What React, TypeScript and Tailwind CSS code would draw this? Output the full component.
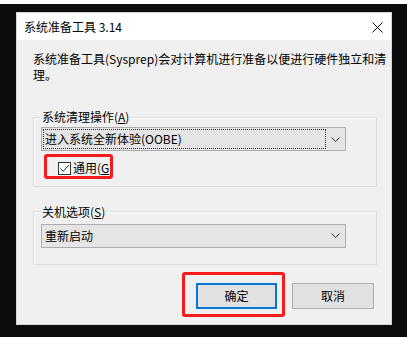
const font = "font-['Noto_Sans_CJK_SC','Noto_Sans',sans-serif]";

function Combo({ label, focused }: { label: string; focused?: boolean }) {
  return (
    <div className="flex h-[24px] w-[305px] border border-[#adadad] bg-[#e5e5e5] p-[1px]">
      <div
        className={`flex flex-1 items-center border px-[1px] ${
          focused ? 'border-dotted border-[#333]' : 'border-transparent'
        }`}
      >
        {label}
      </div>
      <div className="flex w-[18px] items-center justify-center">
        <svg width="9" height="5" viewBox="0 0 9 5">
          <path d="M0.5 0.5L4.5 4.5L8.5 0.5" fill="none" stroke="#333" strokeWidth="1" />
        </svg>
      </div>
    </div>
  );
}

export default function App() {
  return (
    <div className={`flex h-[337px] w-[407px] flex-col overflow-hidden bg-[#0c0c0c] text-[12px] leading-[16px] text-black ${font}`}>
      <div className="h-[4px] shrink-0 bg-white" />
      <div className="pl-[16px] pt-[8px]">
        <div className="flex h-[313px] w-[376px] flex-col border border-[#d4d4d4]">
          {/* title bar */}
          <div className="flex h-[27px] shrink-0 items-center justify-between bg-white pl-[7px] pr-[8px]">
            <span>系统准备工具 3.14</span>
            <svg width="11" height="11" viewBox="0 0 11 11" className="mt-[1px]">
              <path d="M0.5 0.5L10.5 10.5M10.5 0.5L0.5 10.5" stroke="#111" strokeWidth="1" />
            </svg>
          </div>

          {/* body */}
          <div className="flex-1 bg-[#f0f0f0] pl-[16px] pr-[14px] pt-[11px]">
            <p className="whitespace-nowrap">
              系统准备工具(Sysprep)会对计算机进行准备以便进行硬件独立和清
              <br />
              理。
            </p>

            <fieldset className="mt-[26px] border border-[#dcdcdc] pb-[9px] pl-[7px] shadow-[inset_1px_1px_0_#fff]">
              <legend className="px-[1px]">
                系统清理操作(<u>A</u>)
              </legend>
              <div className="mt-[2px]">
                <Combo label="进入系统全新体验(OOBE)" focused />
              </div>
              <div className="relative mt-[9px] ml-[17px] inline-flex h-[16px] items-center">
                <span className="flex h-[13px] w-[13px] items-center justify-center border border-[#333] bg-white">
                  <svg width="11" height="11" viewBox="0 0 11 11">
                    <path d="M1.5 5.5L4.2 8.3L9.8 2.2" fill="none" stroke="#222" strokeWidth="1" />
                  </svg>
                </span>
                <span className="ml-[2px]">
                  通用(<u>G</u>)
                </span>
                <span className="pointer-events-none absolute left-[-14px] top-[-6px] h-[25px] w-[69px] rounded-[3px] border-[3px] border-[#f51b1b]" />
              </div>
            </fieldset>

            <fieldset className="mt-[17px] border border-[#dcdcdc] pb-[16px] pl-[7px] shadow-[inset_1px_1px_0_#fff]">
              <legend className="px-[1px]">
                关机选项(<u>S</u>)
              </legend>
              <div className="mt-[4px]">
                <Combo label="重新启动" />
              </div>
            </fieldset>

            <div className="mt-[18px] flex justify-end gap-[15px] pr-[3px]">
              <div className="relative">
                <button className="h-[26px] w-[81px] border-2 border-[#0078d7] bg-[#e1e1e1]">确定</button>
                <span className="pointer-events-none absolute -bottom-[8px] -left-[14px] -right-[8px] -top-[11px] rounded-[3px] border-[3px] border-[#f51b1b]" />
              </div>
              <button className="h-[26px] w-[82px] border border-[#adadad] bg-[#e1e1e1]">取消</button>
            </div>
          </div>
        </div>
      </div>
    </div>
  );
}
